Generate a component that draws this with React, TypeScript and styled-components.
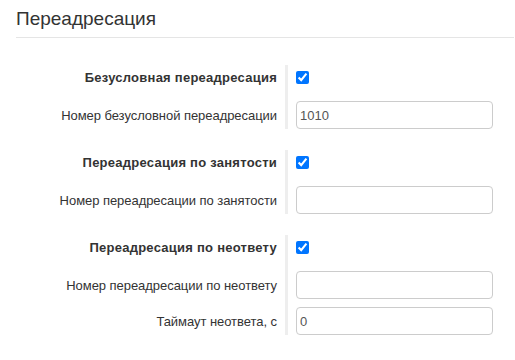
import React from "react";
import styled, { createGlobalStyle } from "styled-components";

const GlobalStyle = createGlobalStyle`
  * {
    box-sizing: border-box;
  }
  html,
  body {
    margin: 0;
    background: #fff;
    color: #333;
    font-family: "Liberation Sans", Arial, sans-serif;
    font-size: 13px;
  }
`;

const Page = styled.div`
  padding: 0 1px 0 16px;
`;

const Heading = styled.h3`
  margin: 0 0 27px;
  padding: 8px 0 7px;
  font-size: 19px;
  font-weight: 400;
  line-height: 22px;
  border-bottom: 1px solid #e5e5e5;
`;

const Group = styled.div`
  display: flex;
  flex-direction: column;
  margin-bottom: 21px;
`;

const Row = styled.div<{ $check?: boolean }>`
  display: flex;
  align-items: ${p => (p.$check ? "flex-start" : "stretch")};
`;

const Label = styled.label<{ $bold?: boolean; $last?: boolean; $check?: boolean }>`
  flex: 0 0 272px;
  display: flex;
  align-items: center;
  justify-content: flex-end;
  height: ${p => (p.$last ? "28px" : "36px")};
  padding: ${p => (p.$check ? "0 8px 12px 0" : p.$last ? "0 8px 0 0" : "0 8px 8px 0")};
  border-right: 3px solid #eee;
  font-weight: ${p => (p.$bold ? 700 : 400)};
  letter-spacing: ${p => (p.$bold ? "0.25px" : "-0.05px")};
  white-space: nowrap;
`;

const Field = styled.div<{ $check?: boolean }>`
  flex: 1;
  display: flex;
  align-items: ${p => (p.$check ? "center" : "flex-start")};
  height: ${p => (p.$check ? "24px" : "auto")};
  padding-left: 8px;
`;

const Check = styled.input`
  margin: 0;
  width: 13px;
  height: 13px;
`;

const TextInput = styled.input`
  width: 197px;
  height: 28px;
  padding: 0 3px;
  border: 1px solid #ccc;
  border-radius: 4px;
  font-family: "Liberation Sans", Arial, sans-serif;
  font-size: 13px;
  color: #555;
  outline: none;
`;

type Item =
  | { kind: "check"; label: string }
  | { kind: "text"; label: string; value: string };

const groups: Item[][] = [
  [
    { kind: "check", label: "Безусловная переадресация" },
    { kind: "text", label: "Номер безусловной переадресации", value: "1010" }
  ],
  [
    { kind: "check", label: "Переадресация по занятости" },
    { kind: "text", label: "Номер переадресации по занятости", value: "" }
  ],
  [
    { kind: "check", label: "Переадресация по неответу" },
    { kind: "text", label: "Номер переадресации по неответу", value: "" },
    { kind: "text", label: "Таймаут неответа, с", value: "0" }
  ]
];

function App() {
  return (
    <>
      <GlobalStyle />
      <Page>
        <Heading>Переадресация</Heading>
        {groups.map((items, g) => (
          <Group key={g}>
            {items.map((item, i) => {
              const last = i === items.length - 1;
              if (item.kind === "check") {
                return (
                  <Row key={i} $check>
                    <Label $bold $check>
                      {item.label}
                    </Label>
                    <Field $check>
                      <Check type="checkbox" defaultChecked />
                    </Field>
                  </Row>
                );
              }
              return (
                <Row key={i}>
                  <Label $last={last}>{item.label}</Label>
                  <Field>
                    <TextInput type="text" defaultValue={item.value} />
                  </Field>
                </Row>
              );
            })}
          </Group>
        ))}
      </Page>
    </>
  );
}

export default App;
